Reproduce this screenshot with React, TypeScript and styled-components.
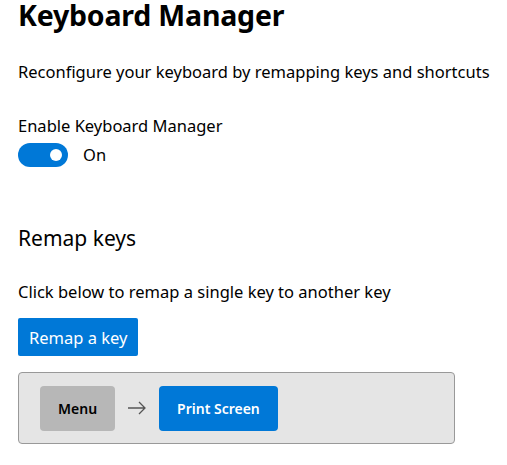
import React from "react";
import styled, { createGlobalStyle } from "styled-components";

const GlobalStyle = createGlobalStyle`
  body {
    margin: 0;
    background: #ffffff;
    font-family: "Noto Sans", "Open Sans", sans-serif;
    color: #000000;
  }
`;

const Page = styled.div`
  padding: 0 18px;
  display: flex;
  flex-direction: column;
  align-items: flex-start;
`;

const Title = styled.h1`
  margin: 0;
  font-size: 28.5px;
  font-weight: 700;
  line-height: 30px;
  letter-spacing: -0.2px;
`;

const Text = styled.p<{ $top: number }>`
  margin: ${p => p.$top}px 0 0;
  font-size: 16.5px;
  line-height: 24px;
  white-space: nowrap;
`;

const Toggle = styled.div`
  display: flex;
  align-items: center;
  gap: 15px;
  margin-top: 5px;
  font-size: 16.5px;
  line-height: 24px;
`;

const Track = styled.div<{ $on: boolean }>`
  width: 50px;
  height: 24px;
  border-radius: 12px;
  background: ${p => (p.$on ? "#0078d7" : "#ffffff")};
  display: flex;
  align-items: center;
  justify-content: ${p => (p.$on ? "flex-end" : "flex-start")};
  padding: 0 6px;
  box-sizing: border-box;
`;

const Thumb = styled.div`
  width: 12px;
  height: 12px;
  border-radius: 50%;
  background: #ffffff;
`;

const SubTitle = styled.h2`
  margin: 57px 0 0;
  font-size: 21px;
  font-weight: 400;
  line-height: 28px;
`;

const Button = styled.button`
  margin-top: 14px;
  height: 38px;
  padding: 0 11px;
  border: none;
  border-radius: 2px;
  background: #0078d7;
  color: #ffffff;
  font-family: inherit;
  font-size: 16.5px;
`;

const Mapping = styled.div`
  margin-top: 16px;
  width: 437px;
  height: 72px;
  box-sizing: border-box;
  border: 1px solid #999999;
  border-radius: 4px;
  background: #e5e5e5;
  display: flex;
  align-items: center;
  gap: 13px;
  padding: 0 21px;
`;

const Key = styled.div<{ $accent?: boolean }>`
  height: 45px;
  padding: 0 18px;
  min-width: 75px;
  box-sizing: border-box;
  border-radius: 4px;
  display: flex;
  align-items: center;
  justify-content: center;
  background: ${p => (p.$accent ? "#0078d7" : "#b7b7b7")};
  color: ${p => (p.$accent ? "#ffffff" : "#000000")};
  font-size: 14px;
  font-weight: 600;
`;

const Arrow = () => (
  <svg width="18" height="14" viewBox="0 0 18 14" fill="none" stroke="#555555" strokeWidth="1.3">
    <path d="M0 7 H17 M11 1 L17 7 L11 13" />
  </svg>
);

const App: React.FC = () => {
  return (
    <>
      <GlobalStyle />
      <Page>
        <Title>Keyboard Manager</Title>
        <Text $top={30}>Reconfigure your keyboard by remapping keys and shortcuts</Text>
        <Text $top={30}>Enable Keyboard Manager</Text>
        <Toggle>
          <Track $on>
            <Thumb />
          </Track>
          <span>On</span>
        </Toggle>
        <SubTitle>Remap keys</SubTitle>
        <Text $top={28}>Click below to remap a single key to another key</Text>
        <Button>Remap a key</Button>
        <Mapping>
          <Key>Menu</Key>
          <Arrow />
          <Key $accent>Print Screen</Key>
        </Mapping>
      </Page>
    </>
  );
};

export default App;
